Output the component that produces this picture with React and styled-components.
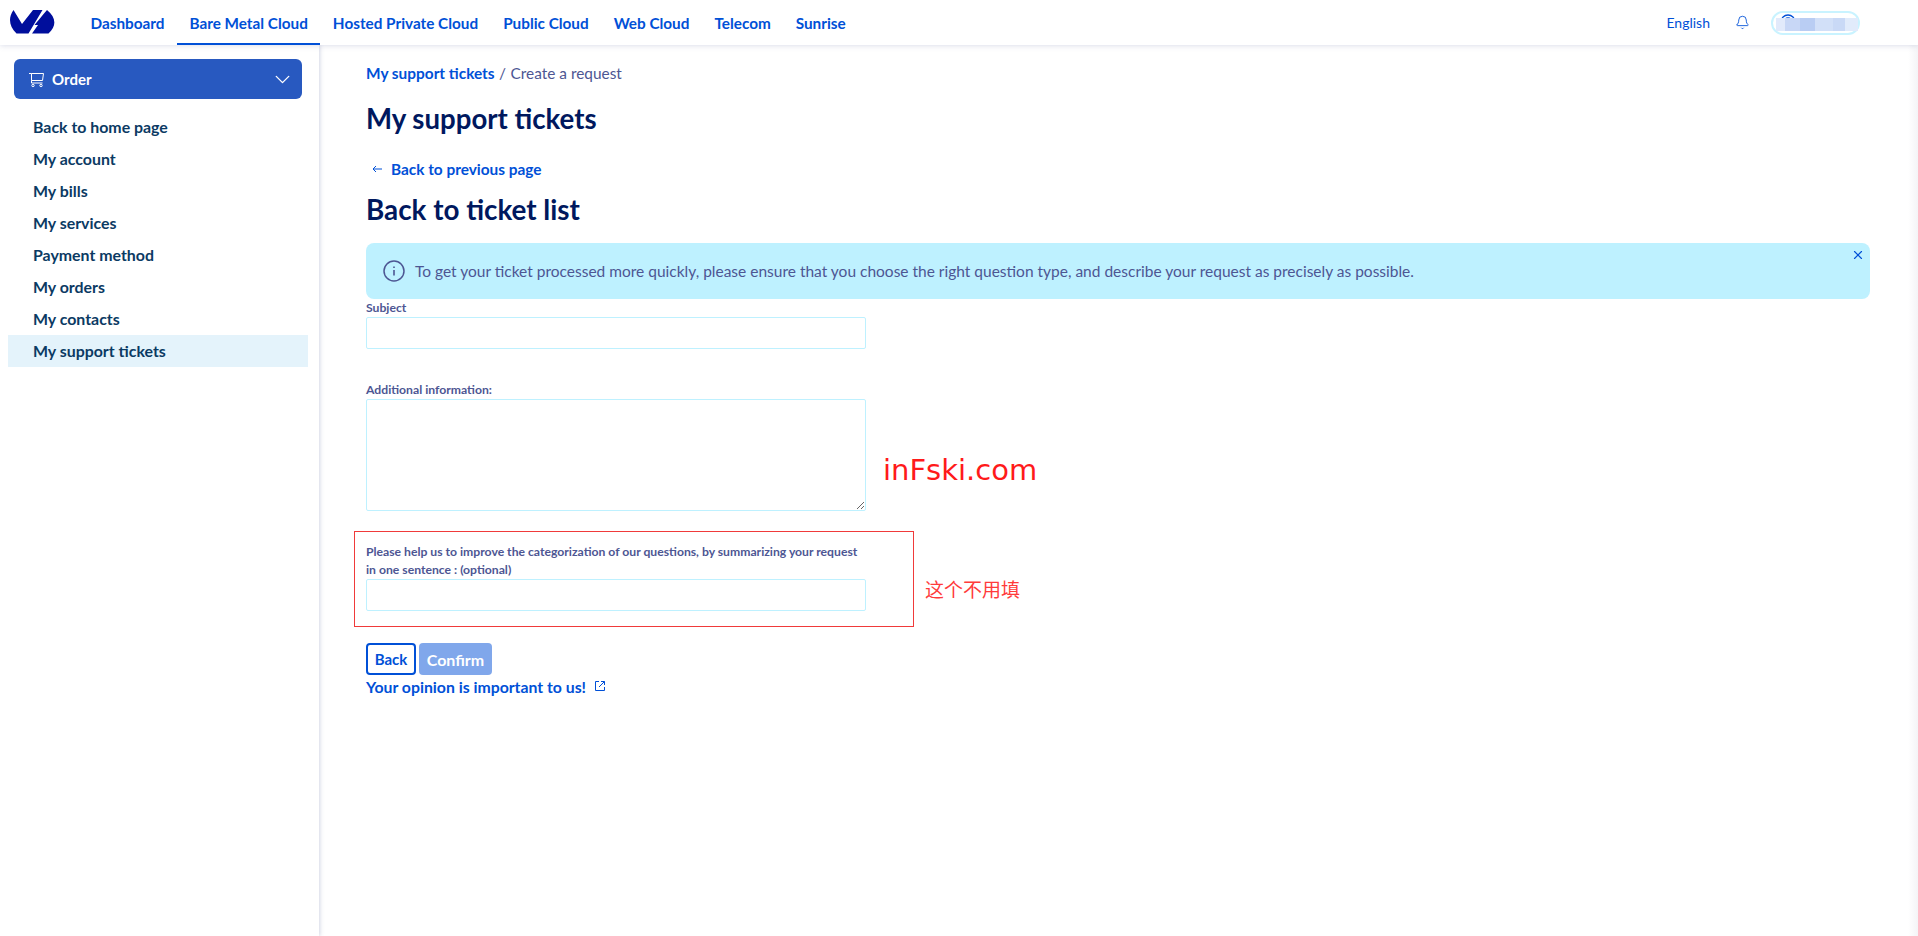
import React from 'react';
import styled, { createGlobalStyle } from 'styled-components';
import { Bell, ChevronDown, X } from 'lucide-react';

const GlobalStyle = createGlobalStyle`
  html, body {
    margin: 0;
    padding: 0;
    background: #fff;
    font-family: "Lato", "Noto Sans", sans-serif;
    color: #4d5693;
  }
  * {
    box-sizing: border-box;
  }
`;

const Page = styled.div`
  display: flex;
  flex-direction: column;
  min-height: 100vh;
`;

const TopBar = styled.header`
  display: flex;
  align-items: center;
  height: 45px;
  padding-left: 10px;
  padding-right: 58px;
  background: #fff;
  box-shadow: 0 0 6px rgba(77, 86, 147, 0.25);
  position: relative;
  z-index: 2;
`;

const NavList = styled.nav`
  display: flex;
  align-self: stretch;
  margin-left: 22px;
`;

const NavItem = styled.a`
  display: flex;
  align-items: center;
  padding: 2px 12.5px 0;
  font-size: 15.3px;
  font-weight: 700;
  color: #0050d7;
  border-bottom: 2px solid ${(p) => (p.$active ? '#0050d7' : 'transparent')};
`;

const TopRight = styled.div`
  display: flex;
  align-items: center;
  margin-left: auto;
  color: #0050d7;
`;

const Language = styled.span`
  font-size: 14px;
  margin-right: 25px;
`;

const BellWrap = styled.span`
  display: flex;
  margin-right: 21px;
`;

const UserPill = styled.div`
  position: relative;
  width: 89px;
  height: 24px;
  border: 2px solid #c9f3ff;
  border-radius: 12px;
`;

const UserArc = styled.svg`
  position: absolute;
  left: 7px;
  top: 1px;
`;

const Mosaic = styled.div`
  position: absolute;
  left: 3px;
  top: 5px;
  display: flex;
`;

const MosaicBlock = styled.span`
  width: ${(p) => p.$w}px;
  height: 13px;
  background: ${(p) => p.$c};
`;

const Body = styled.div`
  display: flex;
  flex: 1;
`;

const Sidebar = styled.aside`
  width: 319px;
  flex-shrink: 0;
  padding: 14px 11px 0 8px;
  box-shadow: 1px 0 4px rgba(77, 86, 147, 0.25);
`;

const OrderButton = styled.button`
  display: flex;
  align-items: center;
  width: 288px;
  height: 40px;
  margin-left: 6px;
  padding: 0 7px 0 14px;
  border: none;
  border-radius: 6px;
  background: #2859c0;
  color: #fff;
  font: 700 15px "Lato", sans-serif;
`;

const OrderLabel = styled.span`
  margin-left: 7px;
`;

const OrderChevron = styled(ChevronDown)`
  margin-left: auto;
`;

const SideList = styled.ul`
  list-style: none;
  margin: 12px 0 0;
  padding: 0;
`;

const SideItem = styled.li`
  display: flex;
  align-items: center;
  height: 32px;
  padding: 0 0 2px 25px;
  font-size: 15.9px;
  font-weight: 700;
  color: #0b3a63;
  background: ${(p) => (p.$active ? '#e4f3fb' : 'transparent')};
`;

const Main = styled.main`
  flex: 1;
  padding: 18px 48px 0 47px;
  background: linear-gradient(to right, transparent calc(100% - 10px), #f4f4f6);
`;

const Breadcrumb = styled.div`
  display: flex;
  align-items: center;
  gap: 4.5px;
  height: 20px;
  font-size: 15.4px;
`;

const CrumbLink = styled.a`
  font-weight: 700;
  color: #0050d7;
`;

const PageTitle = styled.h1`
  margin: 18px 0 0;
  font-size: 27.6px;
  line-height: 36px;
  font-weight: 700;
  color: #00185e;
`;

const BackLink = styled.a`
  display: flex;
  align-items: center;
  gap: 9px;
  height: 20px;
  margin-top: 22px;
  padding-left: 6px;
  font-size: 15.4px;
  font-weight: 700;
  color: #0050d7;
`;

const SectionTitle = styled.h2`
  margin: 13px 0 0;
  font-size: 27.8px;
  line-height: 36px;
  font-weight: 700;
  color: #00185e;
`;

const Alert = styled.div`
  position: relative;
  display: flex;
  align-items: center;
  gap: 10px;
  height: 56px;
  margin-top: 15px;
  padding-left: 17px;
  border-radius: 8px;
  background: #bef1ff;
  font-size: 15.5px;
`;

const AlertClose = styled.span`
  position: absolute;
  top: 5px;
  right: 5px;
  display: flex;
  color: #0050d7;
`;

const FieldLabel = styled.label`
  display: block;
  font-size: 12.2px;
  line-height: 18px;
  font-weight: 700;
  color: #4d5693;
`;

const TextInput = styled.input`
  display: block;
  width: 500px;
  height: 32px;
  border: 1px solid #bef1ff;
  border-radius: 2px;
  background: #fff;
  padding: 0 8px;
`;

const TextArea = styled.textarea`
  display: block;
  width: 500px;
  height: 112px;
  border: 1px solid #bef1ff;
  border-radius: 2px;
  background: #fff;
  padding: 4px 8px;
`;

const InfoField = styled.div`
  margin-top: 32px;
`;

const NoteRow = styled.div`
  display: flex;
  align-items: center;
  gap: 17px;
`;

const Annotation = styled.span`
  margin-top: 30px;
  font-family: "DejaVu Sans", sans-serif;
  font-size: 29px;
  color: #ff1a1a;
`;

const BoxRow = styled.div`
  display: flex;
  align-items: center;
  gap: 11px;
  margin: 20px 0 0 -12px;
`;

const RedBox = styled.div`
  width: 560px;
  height: 96px;
  padding: 11px 0 0 11px;
  border: 1px solid #f03a3a;
`;

const BoxLabel = styled(FieldLabel)`
  width: 500px;
`;

const BoxNote = styled.span`
  margin-top: 19px;
  font-family: "Noto Sans CJK SC", sans-serif;
  font-size: 19px;
  color: #ff3b3b;
`;

const Actions = styled.div`
  display: flex;
  gap: 3px;
  margin-top: 16px;
`;

const OutlineButton = styled.button`
  width: 50px;
  height: 32px;
  padding: 0;
  border: 2px solid #0050d7;
  border-radius: 4px;
  background: #fff;
  color: #0050d7;
  font: 700 15px "Lato", sans-serif;
`;

const FilledButton = styled.button`
  width: 73px;
  height: 32px;
  padding: 0;
  border: none;
  border-radius: 4px;
  background: #80a7eb;
  color: #fff;
  font: 700 16px "Lato", sans-serif;
`;

const OpinionLink = styled.a`
  display: flex;
  align-items: center;
  gap: 8px;
  height: 20px;
  margin-top: 1px;
  font-size: 15.8px;
  font-weight: 700;
  color: #0050d7;
`;

const OvhLogo = () => (
  <svg width="46" height="30" viewBox="0 1.5 46 30" fill="#000e9c">
    <path d="M3.500 3.500C-2 11 -1 20 6.500 27H18.500L32.500 3.500H23L12 17.500L3.500 3.500z" />
    <path d="M37 3.500C46 11 47 19 38.500 27H22L28 18.500H24.500L34 7z" />
  </svg>
);

const CartIcon = () => (
  <svg width="17" height="17" viewBox="0 0 17 17" fill="none" stroke="#fff" strokeWidth="1">
    <path d="M3.500 2.500h12l-1 7h-11z" />
    <path d="M1 2.500h2.500M3.500 9.500v2.500h11" />
    <circle cx="5" cy="14.500" r="1.200" />
    <circle cx="13" cy="14.500" r="1.200" />
  </svg>
);

const ArrowIcon = () => (
  <svg width="10" height="10" viewBox="0 0 10 10" fill="none" stroke="#0050d7" strokeWidth="1">
    <path d="M10 5H1M4 2L1 5l3 3" />
  </svg>
);

const InfoIcon = () => (
  <svg width="22" height="22" viewBox="0 0 22 22" fill="none" stroke="#4d5693" strokeWidth="1.500">
    <circle cx="11" cy="11" r="10" />
    <path d="M11 10v5.500M11 6.500v1.500" strokeWidth="1.600" />
  </svg>
);

const ExternalIcon = () => (
  <svg width="12" height="12" viewBox="0 0 12 12" fill="none" stroke="#0050d7" strokeWidth="1">
    <path d="M5 1.500H1.500v9h9V7M7 1.500h3.500V5M10.500 1.500L5 7" />
  </svg>
);

const navItems = [
  'Dashboard',
  'Bare Metal Cloud',
  'Hosted Private Cloud',
  'Public Cloud',
  'Web Cloud',
  'Telecom',
  'Sunrise',
];

const sideItems = [
  'Back to home page',
  'My account',
  'My bills',
  'My services',
  'Payment method',
  'My orders',
  'My contacts',
  'My support tickets',
];

// blurred-out account name
const mosaic = [
  { w: 9, c: '#e2eafb' },
  { w: 15, c: '#c8d7f6' },
  { w: 15, c: '#b9cdf3' },
  { w: 18, c: '#d2e0f8' },
  { w: 12, c: '#c9d9f6' },
  { w: 13, c: '#e1ebfb' },
];

const App = () => (
  <Page>
    <GlobalStyle />
    <TopBar>
      <OvhLogo />
      <NavList>
        {navItems.map((item) => (
          <NavItem key={item} $active={item === 'Bare Metal Cloud'}>
            {item}
          </NavItem>
        ))}
      </NavList>
      <TopRight>
        <Language>English</Language>
        <BellWrap>
          <Bell size={15} strokeWidth={1.4} />
        </BellWrap>
        <UserPill>
          <UserArc width="16" height="8" viewBox="0 0 16 8" fill="none" stroke="#0050d7" strokeWidth="1.300">
            <path d="M1 8a7 7 0 0 1 14 0M4 8a4 4 0 0 1 8 0" />
          </UserArc>
          <Mosaic>
            {mosaic.map((block, index) => (
              <MosaicBlock key={index} $w={block.w} $c={block.c} />
            ))}
          </Mosaic>
        </UserPill>
      </TopRight>
    </TopBar>
    <Body>
      <Sidebar>
        <OrderButton>
          <CartIcon />
          <OrderLabel>Order</OrderLabel>
          <OrderChevron size={25} strokeWidth={1.3} />
        </OrderButton>
        <SideList>
          {sideItems.map((item) => (
            <SideItem key={item} $active={item === 'My support tickets'}>
              {item}
            </SideItem>
          ))}
        </SideList>
      </Sidebar>
      <Main>
        <Breadcrumb>
          <CrumbLink>My support tickets</CrumbLink>
          <span>/</span>
          <span>Create a request</span>
        </Breadcrumb>
        <PageTitle>My support tickets</PageTitle>
        <BackLink>
          <ArrowIcon />
          Back to previous page
        </BackLink>
        <SectionTitle>Back to ticket list</SectionTitle>
        <Alert>
          <InfoIcon />
          To get your ticket processed more quickly, please ensure that you choose the right question type, and describe your request as precisely as possible.
          <AlertClose>
            <X size={14} strokeWidth={2} />
          </AlertClose>
        </Alert>
        <div>
          <FieldLabel>Subject</FieldLabel>
          <TextInput />
        </div>
        <InfoField>
          <FieldLabel>Additional information:</FieldLabel>
          <NoteRow>
            <TextArea />
            <Annotation>inFski.com</Annotation>
          </NoteRow>
        </InfoField>
        <BoxRow>
          <RedBox>
            <BoxLabel>Please help us to improve the categorization of our questions, by summarizing your request in one sentence : (optional)</BoxLabel>
            <TextInput />
          </RedBox>
          <BoxNote>这个不用填</BoxNote>
        </BoxRow>
        <Actions>
          <OutlineButton>Back</OutlineButton>
          <FilledButton>Confirm</FilledButton>
        </Actions>
        <OpinionLink>
          Your opinion is important to us!
          <ExternalIcon />
        </OpinionLink>
      </Main>
    </Body>
  </Page>
);

export default App;
